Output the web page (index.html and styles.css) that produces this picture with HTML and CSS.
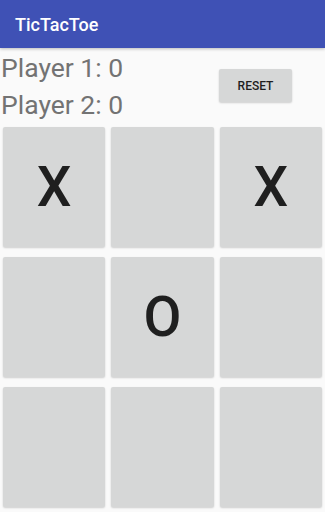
FILE: index.html
```html
<!DOCTYPE html>
<html>
<head>
<meta charset="utf-8">
<link rel="stylesheet" href="styles.css">
</head>
<body>
<div class="app">
  <header class="appbar"><span class="title">TicTacToe</span></header>
  <section class="scores">
    <div class="players">
      <div class="player">Player 1: 0</div>
      <div class="player">Player 2: 0</div>
    </div>
    <button class="reset">RESET</button>
  </section>
  <section class="board">
    <div class="cell"><div class="btn">X</div></div>
    <div class="cell"><div class="btn"></div></div>
    <div class="cell"><div class="btn">X</div></div>
    <div class="cell"><div class="btn"></div></div>
    <div class="cell"><div class="btn">O</div></div>
    <div class="cell"><div class="btn"></div></div>
    <div class="cell"><div class="btn"></div></div>
    <div class="cell"><div class="btn"></div></div>
    <div class="cell"><div class="btn"></div></div>
  </section>
</div>
</body>
</html>
```
FILE: styles.css
```css
html, body {
  margin: 0;
  padding: 0;
  background: #fafafa;
  font-family: Roboto, "Liberation Sans", sans-serif;
}
.app {
  width: 325px;
  height: 512px;
  overflow: hidden;
  display: flex;
  flex-direction: column;
}
.appbar {
  height: 48px;
  background: #3f51b5;
  display: flex;
  align-items: center;
  padding-left: 15px;
  box-shadow: 0 1px 3px rgba(0,0,0,0.25);
  position: relative;
  z-index: 1;
  flex: none;
}
.title {
  color: #ffffff;
  font-size: 18px;
  font-weight: 500;
}
.scores {
  height: 74px;
  flex: none;
  display: flex;
  align-items: center;
}
.players {
  flex: 1;
  padding-top: 1px;
  align-self: flex-start;
}
.player {
  font-size: 26.5px;
  line-height: 37px;
  color: #737373;
  padding-left: 1px;
}
.reset {
  width: 73px;
  height: 33px;
  margin-right: 33px;
  margin-top: 1px;
  border: none;
  border-radius: 2px;
  background: #d6d7d7;
  box-shadow: 0 1px 2px rgba(0,0,0,0.18);
  font-family: Roboto, "Liberation Sans", sans-serif;
  font-size: 12px;
  font-weight: 500;
  color: #1f1f1f;
  padding: 0;
}
.board {
  flex: 1;
  display: grid;
  grid-template-columns: repeat(3, 1fr);
  grid-template-rows: repeat(3, 130px);
}
.cell {
  padding: 5px 3px;
  display: flex;
}
.btn {
  flex: 1;
  background: #d6d7d7;
  border-radius: 2px;
  box-shadow: 0 1px 2px rgba(0,0,0,0.18);
  display: flex;
  align-items: center;
  justify-content: center;
  font-size: 55px;
  font-weight: 500;
  color: #1f1f1f;
}
```
